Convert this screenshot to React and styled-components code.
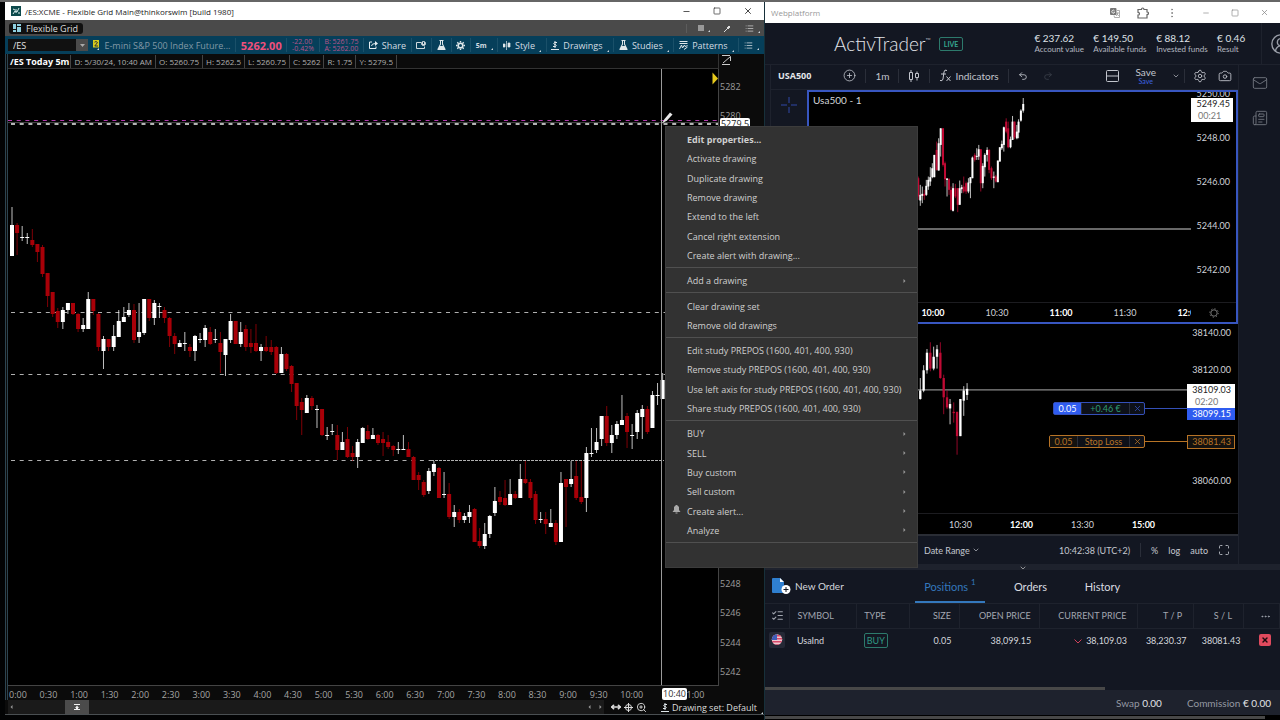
import React from "react";
import styled, { createGlobalStyle, css } from "styled-components";
import {
  Camera, ChevronDown, CirclePlus, Ellipsis, List, ListChecks, Mail,
  Maximize, Minus, Newspaper, Redo2, Settings, Square, Undo2, X, EllipsisVertical,
  MoveHorizontal, ZoomIn, CircleUserRound,
} from "lucide-react";

const GlobalStyle = createGlobalStyle`
  * { box-sizing: border-box; }
  body { margin: 0; background: #000; font-family: "Open Sans", "Noto Sans", sans-serif; font-size: 9px; color: #c8c8c8; }
  button, input { font: inherit; color: inherit; background: none; border: 0; padding: 0; margin: 0; }
  button { display: inline-flex; align-items: center; white-space: nowrap; }
  svg { flex: none; }
`;

/* ---------- data ---------- */

// top, bottom, high, low, direction (1 = up)
const FUTURES = [
  [225,256,207,256,1],[225,233,223,255,0],[237,238,226,241,1],[237,238,233,244,1],[240,245,229,247,0],
  [244,252,244,262,0],[247,274,245,277,0],[273,296,273,307,0],[292,314,292,317,0],[311,322,308,328,0],
  [310,322,307,329,1],[303,310,303,314,1],[303,314,303,315,0],[314,329,313,332,0],[325,329,318,332,1],
  [299,329,292,329,1],[299,311,299,315,0],[314,347,313,351,0],[339,351,336,369,1],[339,347,339,351,0],
  [336,347,325,351,1],[321,337,310,337,1],[317,322,307,322,1],[310,315,303,317,1],[310,340,304,343,0],
  [332,337,303,343,1],[299,333,299,335,1],[299,318,299,321,0],[303,318,300,325,1],[306,307,303,318,1],
  [310,318,307,323,0],[318,336,317,347,0],[336,344,333,354,0],[343,347,340,347,1],[343,344,332,351,1],
  [347,351,344,357,0],[336,351,335,361,1],[339,340,333,343,1],[328,340,325,347,1],[332,344,327,345,0],
  [339,340,329,343,1],[343,352,332,373,0],[339,355,339,376,1],[321,340,314,343,1],[321,344,321,344,0],
  [332,344,322,347,1],[329,347,325,351,0],[343,347,329,353,0],[343,351,324,352,0],[347,351,344,361,1],
  [347,351,336,352,0],[347,352,340,355,0],[347,373,346,374,0],[354,373,347,373,1],[354,369,353,371,0],
  [366,384,365,392,0],[383,406,383,420,0],[402,410,398,435,0],[398,413,395,413,1],[398,406,396,410,0],
  [409,410,405,428,1],[409,435,409,436,0],[435,436,427,440,1],[431,432,424,435,1],[435,450,425,460,0],
  [442,450,432,450,1],[439,457,427,458,0],[453,457,446,461,0],[442,457,439,468,1],[428,443,427,443,1],
  [431,439,425,440,0],[435,439,428,439,1],[435,443,434,445,0],[439,443,432,456,0],[442,447,435,449,0],
  [446,450,445,456,0],[449,450,442,454,1],[449,450,435,450,1],[449,457,442,457,0],[457,480,456,480,0],
  [475,480,472,490,0],[482,495,480,497,0],[471,491,468,494,1],[464,472,461,476,1],[468,498,467,498,0],
  [494,495,472,498,1],[494,517,483,519,0],[512,517,505,527,1],[512,520,509,523,0],[516,520,513,523,1],
  [512,517,505,523,1],[509,542,508,542,0],[541,546,528,548,0],[534,546,523,549,1],[516,534,515,538,1],
  [501,513,487,516,1],[497,502,491,505,0],[498,505,480,506,0],[494,505,479,505,1],[494,498,491,499,0],
  [479,498,464,498,1],[479,483,461,484,0],[482,498,479,500,0],[494,520,491,524,0],[519,520,512,523,1],
  [519,524,512,534,0],[523,527,509,527,1],[523,542,520,545,0],[483,542,472,542,1],[479,487,479,527,0],
  [479,484,461,487,1],[476,498,461,500,0],[497,502,461,504,0],[453,498,447,512,1],[453,454,428,457,1],
  [442,450,428,453,1],[416,439,416,446,1],[416,443,406,446,0],[435,443,425,453,1],[424,435,421,439,1],
  [420,425,395,425,1],[416,432,413,448,0],[435,436,424,449,1],[413,432,410,439,1],[409,417,405,439,1],
  [409,432,406,434,0],[395,428,391,428,1],[395,396,383,405,1],[380,399,373,399,1],
];

// x, top, bottom, high, low, direction
const USA500 = [
  [57,265,320,260,330,0],[63,315,332,285,348,1],[69,312,318,290,340,1],[75,312,318,300,330,0],[81,288,315,270,318,1],
  [87,270,290,260,300,1],[93,262,275,232,288,1],[99,235,262,220,265,1],[105,195,262,195,262,1],[112,180,240,155,242,0],
  [118,160,242,145,242,1],[124,115,165,115,200,1],[131,115,225,115,230,0],[137,220,268,215,290,0],[143,266,270,265,320,1],
  [149,268,300,265,315,0],[155,300,360,290,362,0],[161,295,363,280,365,1],[168,295,320,282,325,0],[175,295,345,295,367,0],
  [181,295,345,272,345,1],[187,292,298,285,310,1],[193,290,305,260,310,0],[200,280,305,275,312,0],[207,278,305,265,310,1],
  [213,262,280,262,325,1],[219,203,265,200,265,1],[226,195,210,190,215,0],[232,198,201,175,210,1],[238,178,200,165,210,1],
  [244,178,280,178,305,0],[250,228,280,220,295,1],[256,195,232,190,260,1],[263,180,195,172,215,1],[269,180,240,178,250,0],
  [276,235,265,230,270,0],[283,260,264,245,295,1],[289,260,275,255,278,0],[295,212,277,212,277,1],[301,172,215,172,215,1],
  [307,162,175,152,180,1],[313,112,165,110,185,1],[320,95,125,85,130,0],[326,115,172,95,175,0],[333,148,172,140,175,1],
  [339,95,150,78,150,1],[345,95,142,95,148,0],[352,125,145,105,148,1],[357,95,128,88,145,1],[364,62,92,58,95,1],[371,42,62,24,68,1],
];
const USAIND = [
  [63,215,240,178,242,1],[73,155,215,140,220,1],[83,103,155,92,165,1],[93,103,150,72,158,0],[103,115,150,85,155,1],
  [113,93,115,80,150,1],[123,103,178,72,180,0],[133,178,235,168,285,0],[143,235,265,215,270,0],[152,255,268,240,315,1],
  [163,278,282,250,310,0],[173,278,350,278,405,0],[183,240,350,240,350,1],[193,215,245,202,290,1],[203,210,228,193,243,1],
];

const HALF_HOURS = ["0:00","0:30","1:00","1:30","2:00","2:30","3:00","3:30","4:00","4:30","5:00","5:30","6:00","6:30","7:00","7:30","8:00","8:30","9:00","9:30","10:00","","11:00"];

const MENU = [
  [["Edit properties...", "bold"], ["Activate drawing"], ["Duplicate drawing"], ["Remove drawing"], ["Extend to the left"], ["Cancel right extension"], ["Create alert with drawing..."]],
  [["Add a drawing", "sub"]],
  [["Clear drawing set"], ["Remove old drawings"]],
  [["Edit study PREPOS (1600, 401, 400, 930)"], ["Remove study PREPOS (1600, 401, 400, 930)"], ["Use left axis for study PREPOS (1600, 401, 400, 930)"], ["Share study PREPOS (1600, 401, 400, 930)"]],
  [["BUY", "sub"], ["SELL", "sub"], ["Buy custom", "sub"], ["Sell custom", "sub"], ["Create alert...", "sub", "bell"], ["Analyze", "sub"]],
];

/* ---------- shared ---------- */

const Screen = styled.div`
  position: relative;
  display: grid;
  grid-template-columns: minmax(0, 764fr) minmax(0, 516fr);
  min-height: 100vh;
  border-top: 2px solid #666;
  background: #020304;
  overflow: hidden;
`;
const Row = styled.div`
  display: flex;
  align-items: center;
  gap: ${(p) => p.$gap || 0}px;
`;
const Spacer = styled.div`flex: 1;`;
const Gap = styled.i`width: ${(p) => p.$w}px;`;
const ChartSvg = styled.svg`
  display: block;
  width: 100%;
  height: 100%;
`;

/* ---------- left window ---------- */

const DeskWindow = styled.section`
  display: flex;
  flex-direction: column;
  margin: 0 0 5px 5px;
  border-bottom: 1px solid #4a4f52;
  background: #0b0b0b;
`;
const DeskTitle = styled.header`
  display: flex;
  align-items: center;
  gap: 4px;
  height: 18px;
  padding: 0 11px 0 6px;
  background: #fff;
  color: #222;
  font-size: 8px;
`;
const WinButtons = styled.div`
  display: flex;
  align-items: center;
  gap: ${(p) => p.$gap}px;
  margin-left: ${(p) => p.$left || "auto"};
  color: ${(p) => p.$color};
`;
const GridBar = styled.div`
  display: flex;
  align-items: center;
  justify-content: space-between;
  height: 16px;
  padding: 0 4px;
  background: #4a4a4a;
`;
const GridTab = styled.button`
  && { gap: 5px; height: 11px; padding: 0 5px 0 4px; border-radius: 3px; background: #101010; color: #ddd; }
`;
const GridTools = styled.div`
  display: flex;
  align-items: center;
  gap: 14px;
  padding-left: 7px;
  border-left: 1px solid #5c5c5c;
  color: #ccc;
`;
const SymbolBar = styled.div`
  display: flex;
  align-items: center;
  justify-content: space-between;
  height: 18px;
  padding: 0 5px 0 3px;
  background: #063f5a;
  color: #d5dde2;
`;
const SymbolField = styled.div`
  display: flex;
  height: 12px;
  width: 80px;
  input { width: 68px; padding-left: 5px; background: #111; color: #e4e4e4; border-radius: 0; }
  button { width: 12px; justify-content: center; background: #4b4b4b; color: #aaa; }
`;
const Instrument = styled.span`
  color: #8299a6;
  white-space: nowrap;
`;
const Last = styled.strong`
  color: #f0507c;
  font-size: 11px;
`;
const Quotes = styled.div`
  font-size: 7px;
  line-height: 7px;
  color: #b5558a;
  white-space: nowrap;
`;
const Rule = styled.i`
  width: 1px;
  height: ${(p) => p.$h || 14}px;
  background: ${(p) => p.$color || "#1a5069"};
`;
const ToolButton = styled.button`
  && { position: relative; gap: 4px; padding-right: ${(p) => (p.$menu ? 6 : 0)}px; }
  ${(p) => p.$menu && css`
    &::after { content: ""; position: absolute; right: 0; bottom: 0; border: 1px solid #cfd8dd; border-top-color: transparent; border-left-color: transparent; }
  `}
`;
const Interval = styled.b`font-size: 7px;`;
const DeskBody = styled.div`
  flex: 1;
  display: grid;
  grid-template-columns: minmax(0, 1fr) 45px;
  grid-template-rows: 15px minmax(0, 1fr) 14px;
  border-left: 3px double #2c4450;
`;
const InfoBar = styled.div`
  display: flex;
  align-items: center;
  color: #b0b0b0;
  border-bottom: 1px solid #333;
  border-right: 1px solid #333;
  span, strong { padding: 0 3px; border-right: 1px solid #444; white-space: nowrap; line-height: 13px; }
  span { font-size: 8px; }
  strong { padding: 0 1px 0 2px; color: #fff; }
`;
const AxisHead = styled.div`
  padding: 1px 0 0 3px;
  color: #bbb;
`;
const Plot = styled.div`
  position: relative;
  min-height: 0;
  background: #000;
  border-right: 1px solid #444;
  border-bottom: 1px solid #444;
  svg { position: absolute; inset: 0; }
`;
const PriceAxis = styled.div`
  position: relative;
  display: flex;
  flex-direction: column;
  padding: 3px 0 0 1px;
  color: #9c9c9c;
  span { flex: 1; display: flex; align-items: center; min-height: 0; }
`;
const AxisTag = styled.div`
  position: absolute;
  top: 49px;
  left: 1px;
  width: 30px;
  height: 11px;
  border-radius: 2px;
  background: #fff;
  color: #222;
  line-height: 11px;
  text-align: center;
`;
const TimeAxis = styled.div`
  grid-column: 1 / -1;
  position: relative;
  display: grid;
  grid-template-columns: repeat(23, minmax(0, 1fr));
  align-items: center;
  padding: 2px 52px 0 1px;
  color: #a6a6a6;
`;
const TimeTag = styled.div`
  position: absolute;
  left: 654px;
  top: 2px;
  width: 25px;
  height: 12px;
  border-radius: 2px;
  background: #fff;
  color: #333;
  line-height: 12px;
  text-align: center;
`;
const DeskFooter = styled.footer`
  display: flex;
  align-items: center;
  gap: 3px;
  height: 14px;
  padding: 0 1px 0 3px;
  color: #ddd;
`;
const Scroller = styled.div`
  flex: 1;
  display: flex;
  align-items: center;
  align-self: stretch;
  padding: 0 2px;
  background: #1a1a1a;
  color: #888;
`;
const Thumb = styled.button`
  && { justify-content: center; width: 24px; height: 14px; margin-left: 52px; background: #4b4b4b; color: #fff; }
`;

const Candle = ({ x, w, c, up, down }) => {
  const [top, bottom, high, low, dir] = c;
  return (
    <g fill={dir ? up : down}>
      <rect x={x - w.wick / 2} y={high} width={w.wick} height={low - high} opacity="0.75" />
      <rect x={x - w.body / 2} y={top} width={w.body} height={Math.max(1, bottom - top)} />
    </g>
  );
};

function FuturesChart() {
  const dash = { stroke: "#b0b0b0", strokeDasharray: "4 4.7" };
  return (
    <ChartSvg viewBox="8 69 710 616" preserveAspectRatio="none" role="img" aria-label="Five minute candles">
      <line x1="11" x2="665" y1="312.5" y2="312.5" {...dash} />
      <line x1="11" x2="665" y1="374.5" y2="374.5" {...dash} />
      <line x1="11" x2="433" y1="460.5" y2="460.5" {...dash} />
      <line x1="431" x2="664" y1="460.5" y2="460.5" stroke="#b0b0b0" strokeDasharray="3 1" />
      {FUTURES.map((c, i) => (
        <Candle key={i} x={12 + i * 5.083} c={c} w={{ wick: 1, body: 4 }} up="#fff" down="#a80008" />
      ))}
      <line x1="8" x2="718" y1="120.5" y2="120.5" stroke="#b43cae" strokeDasharray="4 4.7" />
      <line x1="8" x2="718" y1="122.6" y2="122.6" stroke="#4c4c4c" />
      <line x1="11" x2="718" y1="124" y2="124" stroke="#f0f0f0" strokeWidth="1.600" strokeDasharray="4 4.7" />
      <line x1="661.5" x2="661.5" y1="69" y2="686" stroke="#9a9a9a" />
      <path d="M712.5 72.500 718 78.500 712.500 84.500Z" fill="#e6c91c" />
      <path d="M662 123.500 664.500 119 670 112.500 672.500 114.500 667 120.500Z" fill="#e8e8e8" />
    </ChartSvg>
  );
}

const Flask = () => (
  <svg width="9" height="10" viewBox="0 0 9 10" fill="#dfe7ea"><path d="M2.500 0h4v1H6v3l2.500 5v1h-8V9L3 4V1h-.500z" /><path d="M4 1h1v3.500L6 6H3l1-1.500z" fill="#063f5a" /></svg>
);
const Dollar = () => (
  <svg width="8" height="9" viewBox="0 0 8 9" fill="none" stroke="#dfe7ea"><path d="M0 8.500h8M4 0v7M6 1.500H3.500q-1.500 1 0 2h1q1.500 1 0 2H2" /></svg>
);
const Arrow = ({ dir }) => (
  <svg width="3" height="4" viewBox="0 0 3 4"><path d={dir === "left" ? "M2.500 0v4L.500 2z" : "M.500 0v4l2-2z"} fill="#999" /></svg>
);

function Desktop() {
  return (
    <DeskWindow>
      <DeskTitle>
        <svg width="10" height="10" viewBox="0 0 10 10"><rect width="10" height="10" fill="#0d4a4c" /><path d="M2 8 4 5 6 6 8 2M5 3v4M2 3l2 1M8 6v2" stroke="#d8ecec" fill="none" strokeWidth="1" /></svg>
        <span>/ES:XCME - Flexible Grid Main@thinkorswim [build 1980]</span>
        <WinButtons $gap={22} $color="#222">
          <button aria-label="Minimize"><Minus size={9} /></button>
          <button aria-label="Maximize"><Square size={8} /></button>
          <button aria-label="Close"><X size={10} /></button>
        </WinButtons>
      </DeskTitle>
      <GridBar>
        <GridTab>
          <svg width="8" height="8" viewBox="0 0 8 8" fill="#8fd0e0"><path d="M0 0h3v5H0zM4 0h4v2H4zM4 3h4v5H4zM0 6h3v2H0z" /></svg>
          Flexible Grid
        </GridTab>
        <GridTools>
          <ToolButton $menu aria-label="Layout"><svg width="10" height="8" viewBox="0 0 10 8"><path d="M4 1h6v6H4z" fill="#999" /></svg></ToolButton>
          <button aria-label="Pin"><svg width="7" height="7" viewBox="0 0 7 7"><path d="M0 7 3 4M3 3l2-2 1 1-2 2z" stroke="#ddd" fill="#ddd" /></svg></button>
          <ToolButton $menu aria-label="List"><List size={9} /></ToolButton>
        </GridTools>
      </GridBar>
      <SymbolBar>
        <SymbolField>
          <input aria-label="Symbol" defaultValue="/ES" />
          <button aria-label="Choose symbol"><svg width="5" height="3" viewBox="0 0 5 3"><path d="M0 0h5L2.500 3z" fill="#aaa" /></svg></button>
        </SymbolField>
        <svg width="7" height="10" viewBox="0 0 7 10"><path d="M0 0h6v7.500H0z" fill="#d6cb1e" /><path d="M1.500 2.200 3 1.500 4.500 2.500 1.800 6H5" stroke="#333" fill="none" /><path d="M6 8v2H4z" fill="#ddd" /></svg>
        <Instrument>E-mini S&amp;P 500 Index Future...</Instrument>
        <Rule />
        <Last>5262.00</Last>
        <Rule />
        <Quotes>-22.00<br />-0.42%</Quotes>
        <Rule />
        <Quotes>B: 5261.75<br />A: 5262.00</Quotes>
        <Rule />
        <ToolButton><svg width="9" height="8" viewBox="0 0 9 8" fill="none" stroke="#e5edf0"><path d="M3 1H.500v6.500h6.500V5.500M2.500 5q0-2.500 4-2.500" /><path d="M6 0 9 2.500 6 5z" fill="#e5edf0" stroke="none" /></svg>Share</ToolButton>
        <Rule />
        <ToolButton aria-label="Detach"><svg width="10" height="8" viewBox="0 0 10 8" fill="none" stroke="#cfd8dd"><path d="M5 1.500H.500v6h8V5.500" /><circle cx="7.500" cy="2.500" r="2" fill="#cfd8dd" /><path d="M7.500 1v2" stroke="#063f5a" /></svg></ToolButton>
        <Rule />
        <ToolButton aria-label="Scanner"><Flask /></ToolButton>
        <Rule />
        <ToolButton aria-label="Settings"><svg width="9" height="9" viewBox="0 0 9 9" fill="none" stroke="#dfe7ea"><circle cx="4.500" cy="4.500" r="2.300" strokeWidth="1.600" /><path d="M4.500 0v1.500M4.500 7.500V9M0 4.500h1.500M7.500 4.500H9M1.300 1.300l1.100 1.100M6.600 6.600l1.100 1.100M1.300 7.700l1.100-1.100M6.600 2.400l1.100-1.100" strokeWidth="1.400" /></svg></ToolButton>
        <Rule />
        <ToolButton $menu><Interval>5m</Interval></ToolButton>
        <Rule />
        <ToolButton $menu><svg width="8" height="9" viewBox="0 0 8 9"><path d="M0 3h2v3H0zM5 2h2v4H5zM3.500 0v9" stroke="#dfe7ea" fill="#dfe7ea" strokeWidth=".7" /></svg>Style</ToolButton>
        <Rule />
        <ToolButton $menu><Dollar />Drawings</ToolButton>
        <Rule />
        <ToolButton $menu><Flask />Studies</ToolButton>
        <Rule />
        <ToolButton $menu><svg width="9" height="9" viewBox="0 0 9 9" fill="none" stroke="#dfe7ea"><path d="M.500.500h8M.500 2.500h8M.500 8 2.500 4l1 3 2-3 1 2 2-2M5 8.500 8.500 6" /></svg>Patterns</ToolButton>
        <Rule />
        <ToolButton $menu aria-label="More"><List size={9} /></ToolButton>
      </SymbolBar>
      <DeskBody>
        <InfoBar>
          <strong>/ES Today 5m</strong><span>D: 5/30/24, 10:40 AM</span><span>O: 5260.75</span><span>H: 5262.5</span>
          <span>L: 5260.75</span><span>C: 5262</span><span>R: 1.75</span><span>Y: 5279.5</span>
        </InfoBar>
        <AxisHead><svg width="10" height="10" viewBox="0 0 10 10" fill="none" stroke="#ccc"><path d="M0 .500h8M1 8 8.500 1.500V6M0 9.500h8" /></svg></AxisHead>
        <Plot><FuturesChart /></Plot>
        <PriceAxis>
          {Array.from({ length: 21 }, (_, i) => 5282 - 2 * i).map((v) => (
            <span key={v}>{v >= 5280 || v <= 5248 ? v : ""}</span>
          ))}
          <AxisTag>5279.5</AxisTag>
        </PriceAxis>
        <TimeAxis>
          {HALF_HOURS.map((t, i) => <span key={i}>{t}</span>)}
          <TimeTag>10:40</TimeTag>
        </TimeAxis>
      </DeskBody>
      <DeskFooter>
        <Scroller>
          <Arrow dir="left" />
          <Thumb aria-label="Scroll"><svg width="6" height="6" viewBox="0 0 6 6"><path d="M0 0h6v1H0zM3 1.500 5 4H1zM0 5h6v1H0zM2 3h2v2H2z" fill="#eee" /></svg></Thumb>
          <Spacer />
          <Row $gap={8}><Arrow dir="left" /><Arrow /></Row>
        </Scroller>
        <Gap $w={1} />
        <MoveHorizontal size={10} strokeWidth={4} />
        <svg width="9" height="9" viewBox="0 0 9 9" fill="none" stroke="#ddd"><circle cx="4.500" cy="4.500" r="3" /><path d="M4.500 0v9M0 4.500h9" /></svg>
        <ZoomIn size={11} />
        <Gap $w={8} />
        <Dollar />
        <ToolButton $menu>Drawing set: Default</ToolButton>
      </DeskFooter>
    </DeskWindow>
  );
}

/* ---------- context menu ---------- */

const Menu = styled.div`
  position: absolute;
  z-index: 5;
  left: 665px;
  top: 124px;
  width: 253px;
  height: 442px;
  display: flex;
  flex-direction: column;
  padding: 3px 0 21px;
  background: #323232;
  border: 1px solid #3c3c3c;
`;
const MenuGroup = styled.div`
  flex: ${(p) => p.$n} 1 0;
  display: flex;
  flex-direction: column;
`;
const MenuLine = styled.hr`
  width: 100%;
  margin: 2px 0 3px;
  border: 0;
  border-top: 1px solid #505050;
`;
const MenuItem = styled.button`
  && {
    position: relative;
    flex: 1 1 0;
    justify-content: space-between;
    padding: 0 11px 0 21px;
    color: #cfcfcf;
    font-weight: ${(p) => (p.$bold ? 700 : 400)};
  }
`;
const MenuIcon = styled.span`
  position: absolute;
  left: 6px;
  top: 4px;
  line-height: 0;
`;

function ContextMenu() {
  return (
    <Menu role="menu">
      {MENU.map((group, g) => (
        <React.Fragment key={g}>
          <MenuGroup $n={group.length}>
            {group.map(([label, kind, icon]) => (
              <MenuItem key={label} role="menuitem" $bold={kind === "bold"}>
                {icon && <MenuIcon><svg width="9" height="9" viewBox="0 0 9 9"><path d="M4 0h1l2 2v3l1.500 2h-8L2 5V2zM3.500 7.500h2v1h-2z" fill="#aaa" /></svg></MenuIcon>}
                <span>{label}</span>
                {kind === "sub" && <Arrow />}
              </MenuItem>
            ))}
          </MenuGroup>
          <MenuLine />
        </React.Fragment>
      ))}
    </Menu>
  );
}

/* ---------- right window ---------- */

const WebWindow = styled.section`
  display: flex;
  flex-direction: column;
  min-width: 0;
  border-left: 1px solid #17303a;
  background: #131722;
  color: #c9ccd3;
  font-family: Lato, sans-serif;
`;
const WebTitle = styled.header`
  display: flex;
  align-items: center;
  height: 21px;
  padding: 0 11px 0 6px;
  background: #fff;
  color: #999;
  font-family: "Open Sans", sans-serif;
  font-size: 8px;
`;
const Brand = styled.header`
  display: flex;
  align-items: center;
  height: 41px;
  padding-left: 69px;
  overflow: hidden;
`;
const BrandName = styled.h1`
  margin: 0;
  color: #e3e5ea;
  font-size: 19px;
  font-weight: 300;
  white-space: nowrap;
  sup { font-size: 7px; vertical-align: 8px; line-height: 0; }
`;
const Live = styled.span`
  margin-left: 8px;
  padding: 0 4px;
  border: 1px solid #2d7a6c;
  border-radius: 2px;
  color: #35a48e;
  font-size: 7px;
  font-weight: 700;
  line-height: 12px;
`;
const Figures = styled.dl`
  flex: 1;
  display: grid;
  grid-template-columns: 59fr 63fr 61fr 44fr;
  margin: 0 0 0 71px;
  white-space: nowrap;
  div { display: flex; flex-direction: column-reverse; }
  dt { font-size: 8px; line-height: 10px; color: #b4b8c0; }
  dd { margin: 0; font-size: 10px; line-height: 11px; color: #dfe1e6; }
`;
const Avatar = styled.button`
  && { width: 19px; height: 41px; padding-left: 8px; border-left: 1px solid #1e222d; overflow: hidden; color: #9a9ea8; }
`;
const Workspace = styled.div`
  flex: 1;
  display: grid;
  grid-template-columns: minmax(0, 1fr) 42px;
  border-top: 1px solid #1e222d;
`;
const ChartArea = styled.div`
  display: flex;
  flex-direction: column;
  margin-left: 5px;
  border-left: 1px solid #1e222d;
`;
const ChartTools = styled.div`
  display: flex;
  align-items: center;
  justify-content: space-between;
  height: 25px;
  padding: 0 6px 3px 7px;
  border-bottom: 1px solid #1e222d;
  font-size: 10px;
  color: #c2c5cd;
`;
const ToolGroup = styled.div`
  display: flex;
  align-items: center;
  gap: ${(p) => p.$gap}px;
`;
const Ticker = styled.strong`
  color: #e4e6ea;
  font-family: "Open Sans", sans-serif;
  font-size: 9px;
`;
const SaveButton = styled.button`
  && { flex-direction: column; font-size: 10px; line-height: 10px; }
  small { color: #3d63e0; font-size: 7px; line-height: 8px; }
`;
const ChartRow = styled.div`
  flex: 1;
  display: grid;
  grid-template-columns: 36px minmax(0, 1fr);
`;
const DrawRail = styled.div`
  padding-top: 7px;
  text-align: center;
`;
const Panels = styled.div`
  display: grid;
  grid-template-rows: 235fr 211fr;
  background: #000;
`;
const Panel = styled.div`
  position: relative;
  min-height: 0;
  display: grid;
  grid-template-columns: minmax(0, 1fr) ${(p) => p.$axis}px;
  grid-template-rows: minmax(0, 1fr) 20px;
  border: ${(p) => (p.$active ? "2px solid #3856c0" : "0")};
  font-size: 9px;
  color: #d0d2d8;
`;
const PanelPlot = styled.div`
  position: relative;
  min-height: 0;
  svg.plot { position: absolute; inset: 0; }
`;
const PanelName = styled.div`
  position: absolute;
  left: 4px;
  top: 2px;
  font-size: 10px;
  color: #d4d6da;
`;
const Scale = styled.div`
  position: relative;
  min-height: 0;
  overflow: hidden;
`;
const ScaleList = styled.div`
  position: absolute;
  inset: ${(p) => p.$top}px ${(p) => p.$right}px auto 0;
  display: grid;
  grid-auto-rows: ${(p) => p.$step}px;
  align-items: center;
  text-align: right;
`;
const ScaleTag = styled.div`
  position: absolute;
  top: ${(p) => p.$top}px;
  left: 0;
  right: 3px;
  padding: 0 ${(p) => p.$pad}px;
  background: ${(p) => p.$bg};
  color: ${(p) => p.$fg};
  border: ${(p) => (p.$border ? "1px solid " + p.$border : "0")};
  line-height: 12px;
  text-align: right;
  small { display: block; font-size: 9px; text-align: left; padding-left: 4px; color: #777; }
`;
const Times = styled.div`
  display: flex;
  align-items: center;
  min-width: 0;
  padding: 1px 0 0 ${(p) => p.$pad}px;
  overflow: hidden;
  border-top: 1px solid #1c1c20;
  span { flex: 0 0 ${(p) => p.$step}px; text-align: center; }
  strong { flex: 0 0 ${(p) => p.$step}px; text-align: center; color: #fff; }
`;
const Corner = styled.div`
  display: flex;
  align-items: center;
  justify-content: center;
  padding-top: 1px;
  border-top: 1px solid #1c1c20;
  color: #777;
`;
const OrderLine = styled.div`
  position: absolute;
  right: 0;
  top: ${(p) => p.$top}px;
  display: flex;
  align-items: center;
  &::after { content: ""; width: 42px; height: 1px; background: ${(p) => p.$color}; }
`;
const OrderChip = styled.div`
  display: flex;
  height: 13px;
  border: 1px solid ${(p) => p.$color};
  border-radius: 2px;
  line-height: 11px;
  background: #0d1018;
  color: ${(p) => p.$color};
  b { width: 27px; text-align: center; font-weight: 400; background: ${(p) => p.$fill}; color: ${(p) => p.$fg}; }
  span { width: ${(p) => p.$w}px; text-align: center; color: ${(p) => p.$text}; border-left: 1px solid #2a2d38; }
  button { width: 15px; justify-content: center; border-left: 1px solid #2a2d38; }
`;
const ChartFooter = styled.div`
  display: flex;
  align-items: center;
  justify-content: flex-end;
  gap: 10px;
  height: 30px;
  padding: 1px 8px 0 0;
  border-top: 2px solid #2a2d35;
  font-size: 9px;
  color: #c4c7cf;
`;
const SideRail = styled.aside`
  display: flex;
  flex-direction: column;
  align-items: center;
  gap: 19px;
  padding-top: 10px;
  border-left: 1px solid #1e222d;
  color: #70747e;
`;
const Handle = styled.div`
  height: 6px;
  background: #1e222d;
  line-height: 0;
  text-align: center;
  color: #ccc;
`;
const Tabs = styled.nav`
  display: flex;
  align-items: center;
  height: 33px;
  padding-left: 7px;
  font-size: 11px;
`;
const NewOrder = styled.button`
  && { gap: 4px; width: 143px; font-size: 10px; color: #d5d8de; }
`;
const Tab = styled.button`
  && {
    height: 33px;
    justify-content: center;
    width: ${(p) => p.$w}px;
    padding-top: 2px;
    color: ${(p) => (p.$on ? "#3478bd" : "#d9dbe0")};
    border-bottom: 2px solid ${(p) => (p.$on ? "#3478bd" : "transparent")};
  }
  sup { font-size: 8px; line-height: 0; margin: -8px 0 0 3px; }
`;
const Positions = styled.table`
  width: 100%;
  table-layout: fixed;
  border-collapse: collapse;
  white-space: nowrap;
  th { height: 25px; padding: 0 8px; font-size: 9px; font-weight: 400; color: #a2a6b0; border: solid #1e222d; border-width: 1px 1px 1px 0; text-align: right; }
  td { height: 24px; padding: 0 8px; font-size: 9px; color: #d4d6dc; text-align: right; }
  th:nth-child(n+6), td:nth-child(n+6) { padding-right: 11px; }
  th:first-child, td:first-child { padding: 0; text-align: center; }
  th:last-child, td:last-child { padding: 0 0 0 7px; text-align: center; }
  th:nth-child(2), td:nth-child(2), th:nth-child(3), td:nth-child(3) { text-align: left; padding-left: 7px; }
  svg { vertical-align: middle; }
`;
const Buy = styled.span`
  padding: 1px 2px;
  border: 1px solid #2d7a6c;
  border-radius: 2px;
  color: #2f9a84;
`;
const CloseRow = styled.button`
  && { width: 12px; height: 12px; justify-content: center; border-radius: 2px; background: #e04a5e; color: #1a0a0e; }
`;
const TableRest = styled.div`height: 35px;`;
const HScroll = styled.div`
  height: 3px;
  width: ${(p) => p.$w}%;
  background: #484848;
`;
const Totals = styled.footer`
  display: flex;
  align-items: center;
  justify-content: flex-end;
  gap: 25px;
  height: 25px;
  padding-right: 9px;
  background: #1e222d;
  font-size: 10px;
  color: #9599a3;
  b { font-weight: 400; color: #e0e2e6; }
`;
const Strip = styled.div`
  height: 5px;
  padding-top: 1px;
  background: #000;
`;

const Prices = ({ data, body, wick }) =>
  data.map(([x, ...c]) => <Candle key={x} x={x} c={c} w={{ wick, body }} up="#fff" down="#c00a34" />);

function Web() {
  return (
    <WebWindow>
      <WebTitle>
        Webplatform
        <WinButtons $gap={17} $color="#888">
          <button aria-label="Translate"><svg width="10" height="10" viewBox="0 0 10 10"><rect width="6.500" height="7" rx="1" fill="#777" /><path d="M4.500 2.800A1.500 1.500 0 1 0 4.700 4.200H3.500" stroke="#fff" strokeWidth=".8" fill="none" /><path d="M7 2.500h2.500v7H4.500L4 7.500M6.500 5h2.500M7.800 4.500Q7.500 7 6 8M6.800 6l2 2" stroke="#999" strokeWidth=".8" fill="none" /></svg></button>
          <button aria-label="Extensions"><svg width="12" height="12" viewBox="0 0 12 12" fill="none" stroke="#666" strokeWidth="1.200"><path d="M1 2.500H4.500Q4.500 1 5.700 1T7 2.500H10V5Q11.500 5 11.500 6.300T10 7.700V11H1V8Q2.500 8 2.500 6.700T1 5.300Z" /></svg></button>
          <button aria-label="Menu"><EllipsisVertical size={12} /></button>
        </WinButtons>
        <WinButtons $gap={21} $left="24px" $color="#888">
          <button aria-label="Minimize window"><Minus size={8} /></button>
          <button aria-label="Maximize window"><Square size={8} /></button>
          <button aria-label="Close window"><X size={9} /></button>
        </WinButtons>
      </WebTitle>
      <Brand>
        <BrandName>ActivTrader<sup>™</sup></BrandName>
        <Live>LIVE</Live>
        <Figures>
          <div><dt>Account value</dt><dd>€ 237.62</dd></div>
          <div><dt>Available funds</dt><dd>€ 149.50</dd></div>
          <div><dt>Invested funds</dt><dd>€ 88.12</dd></div>
          <div><dt>Result</dt><dd>€ 0.46</dd></div>
        </Figures>
        <Avatar aria-label="Account"><CircleUserRound size={22} strokeWidth={1.5} /></Avatar>
      </Brand>
      <Workspace>
        <ChartArea>
          <ChartTools>
            <ToolGroup $gap={32}>
              <Ticker>USA500</Ticker>
              <ToolGroup $gap={9}>
                <CirclePlus size={13} strokeWidth={1.5} />
                <Rule $color="#2a2e39" />
                <button>1m</button>
                <Rule $color="#2a2e39" />
                <svg width="12" height="12" viewBox="0 0 12 12" fill="none" stroke="#c2c5cd"><path d="M1.500 2.500h3v7h-3zM3 0v2.500M3 9.500V12M7.500 3.500h3v4h-3zM9 1.500v2M9 7.500v3" /></svg>
                <Rule $color="#2a2e39" />
                <ToolButton>
                  <svg width="12" height="13" viewBox="0 0 12 13" fill="none" stroke="#c2c5cd"><path d="M8 1.500Q5.500 0 5 3L4 10Q3.500 12.500 1 11.500M2 5h5M7.500 7.500l4 4.500M11.500 7.500l-4 4.500" /></svg>
                  Indicators
                </ToolButton>
                <Rule $color="#2a2e39" />
                <ToolGroup $gap={15}>
                  <Undo2 size={10} strokeWidth={2} />
                  <Redo2 size={10} strokeWidth={2} color="#3a3e49" />
                </ToolGroup>
              </ToolGroup>
            </ToolGroup>
            <ToolGroup $gap={8}>
              <ToolGroup $gap={16}>
                <svg width="13" height="12" viewBox="0 0 13 12" fill="none" stroke="#c2c5cd"><rect x=".500" y=".500" width="12" height="11" rx="1" /><path d="M.500 6h12" /></svg>
                <SaveButton>Save<small>Save</small></SaveButton>
                <ToolGroup $gap={4}>
                  <ChevronDown size={8} />
                  <Rule $color="#2a2e39" />
                </ToolGroup>
              </ToolGroup>
              <ToolGroup $gap={11}>
                <Settings size={14} strokeWidth={1.5} />
                <Camera size={14} strokeWidth={1.5} />
              </ToolGroup>
            </ToolGroup>
          </ChartTools>
          <ChartRow>
            <DrawRail><svg width="16" height="16" viewBox="0 0 16 16" stroke="#3048a8"><path d="M8 0v6M8 10v6M0 8h6M10 8h6" /></svg></DrawRail>
            <Panels>
              <Panel $active $axis={45}>
                <PanelPlot>
                  <ChartSvg className="plot" viewBox="-270 6 1143 630" preserveAspectRatio="none" role="img" aria-label="Usa500 candles">
                    <path d="M-270 418H873" stroke="#d0d0d0" strokeWidth="3" />
                    <Prices data={USA500} body={6} wick={3} />
                  </ChartSvg>
                  <PanelName>Usa500 - 1</PanelName>
                </PanelPlot>
                <Scale>
                  <ScaleList $top={-21} $step={44} $right={6}>
                    {["5250.00", "5248.00", "5246.00", "5244.00", "5242.00"].map((p) => <span key={p}>{p}</span>)}
                  </ScaleList>
                  <ScaleTag $top={6} $pad={3} $bg="#fff" $fg="#222">5249.45<small>00:21</small></ScaleTag>
                </Scale>
                <Times $pad={92} $step={64}><strong>10:00</strong><span>10:30</span><strong>11:00</strong><span>11:30</span><strong>12:00</strong></Times>
                <Corner><svg width="10" height="10" viewBox="0 0 10 10" fill="none" stroke="#777"><circle cx="5" cy="5" r="3.200" /><circle cx="5" cy="5" r="4.300" strokeDasharray="1.200 2.177" /></svg></Corner>
              </Panel>
              <Panel $axis={51}>
                <PanelPlot>
                  <ChartSvg className="plot" viewBox="-276 18 1137 562" preserveAspectRatio="none" role="img" aria-label="UsaInd candles">
                    <path d="M-276 213H861" stroke="#8a8a8a" strokeWidth="4" />
                    <Prices data={USAIND} body={7} wick={3} />
                  </ChartSvg>
                  <OrderLine $top={78} $color="#3450b8">
                    <OrderChip $color="#3450b8" $fill="#2f5cf0" $fg="#fff" $text="#2f9a70" $w={48}>
                      <b>0.05</b><span>+0.46 €</span><button aria-label="Close position"><X size={9} /></button>
                    </OrderChip>
                  </OrderLine>
                  <OrderLine $top={111} $color="#b87426">
                    <OrderChip $color="#b87426" $fill="#14120f" $fg="#b87426" $text="#b87426" $w={52}>
                      <b>0.05</b><span>Stop Loss</span><button aria-label="Cancel stop loss"><X size={9} /></button>
                    </OrderChip>
                  </OrderLine>
                </PanelPlot>
                <Scale>
                  <ScaleList $top={-10} $step={37} $right={7}>
                    {["38140.00", "38120.00", "", "", "38060.00"].map((p, i) => <span key={i}>{p}</span>)}
                  </ScaleList>
                  <ScaleTag $top={60} $pad={4} $bg="#fff" $fg="#222">38109.03<small>02:20</small></ScaleTag>
                  <ScaleTag $top={84} $pad={4} $bg="#2f5cf0" $fg="#fff">38099.15</ScaleTag>
                  <ScaleTag $top={111} $pad={3} $bg="#14120f" $fg="#b87426" $border="#b87426">38081.43</ScaleTag>
                </Scale>
                <Times $pad={123} $step={61}><span>10:30</span><strong>12:00</strong><span>13:30</span><strong>15:00</strong></Times>
                <Corner />
              </Panel>
            </Panels>
          </ChartRow>
          <ChartFooter>
            <button>Date Range&nbsp;<ChevronDown size={8} /></button>
            <Gap $w={59} />
            <span>10:42:38 (UTC+2)</span>
            <Rule $color="#2a2e39" />
            <button>%</button><button>log</button><button>auto</button>
            <Maximize size={12} strokeWidth={1.7} />
          </ChartFooter>
        </ChartArea>
        <SideRail>
          <Mail size={16} strokeWidth={1.4} />
          <Newspaper size={16} strokeWidth={1.4} />
        </SideRail>
      </Workspace>
      <Handle><ChevronDown size={8} /></Handle>
      <Tabs>
        <NewOrder>
          <svg width="19" height="18" viewBox="0 0 19 18"><path d="M1 1h7l4 4v11H1Q0 16 0 15V2q0-1 1-1z" fill="#2f7fd0" /><path d="M8 1l4 4H8z" fill="#fff" /><circle cx="14" cy="12.500" r="4.500" fill="#fff" /><path d="M14 10v5M11.500 12.500h5" stroke="#131722" /></svg>
          New Order
        </NewOrder>
        <Tab $on $w={70}>Positions<sup>1</sup></Tab>
        <Tab $w={91}>Orders</Tab>
        <Tab $w={53}>History</Tab>
      </Tabs>
      <Positions>
        <colgroup>
          {[25, 67, 53, 50, 80, 99, 56, 50, 36].map((w, i) => <col key={i} style={{ width: `${(w / 516) * 100}%` }} />)}
        </colgroup>
        <thead>
          <tr>
            <th><ListChecks size={13} strokeWidth={2} aria-label="Columns" /></th><th>SYMBOL</th><th>TYPE</th><th>SIZE</th><th>OPEN PRICE</th>
            <th>CURRENT PRICE</th><th>T / P</th><th>S / L</th><th><Ellipsis size={11} aria-label="More" /></th>
          </tr>
        </thead>
        <tbody>
          <tr>
            <td><svg width="16" height="16" viewBox="0 0 16 16"><rect width="16" height="16" rx="2" fill="#242835" /><clipPath id="flag"><circle cx="8" cy="7.500" r="5.200" /></clipPath><g clipPath="url(#flag)"><path d="M2 2h12v12H2z" fill="#f0c8cf" /><path d="M2 3h12v1.500H2zM2 6h12v1.500H2zM2 9h12v1.500H2zM2 12h12v1.500H2z" fill="#d8486a" /><path d="M2 2h6v6H2z" fill="#3f5cb8" /></g></svg></td>
            <td>UsaInd</td><td><Buy>BUY</Buy></td><td>0.05</td><td>38,099.15</td>
            <td><svg width="8" height="5" viewBox="0 0 8 5" fill="none" stroke="#d0405a"><path d="M.500.500 4 4 7.500.500" /></svg>&nbsp; 38,109.03</td><td>38,230.37</td><td>38081.43</td>
            <td><CloseRow aria-label="Close UsaInd"><X size={8} strokeWidth={4} /></CloseRow></td>
          </tr>
        </tbody>
      </Positions>
      <TableRest />
      <HScroll $w={66} />
      <Totals><span>Swap <b>0.00</b></span><span>Commission <b>€ 0.00</b></span></Totals>
      <Strip><HScroll $w={97} /></Strip>
    </WebWindow>
  );
}

export default function App() {
  return (
    <Screen>
      <GlobalStyle />
      <Desktop />
      <Web />
      <ContextMenu />
    </Screen>
  );
}
